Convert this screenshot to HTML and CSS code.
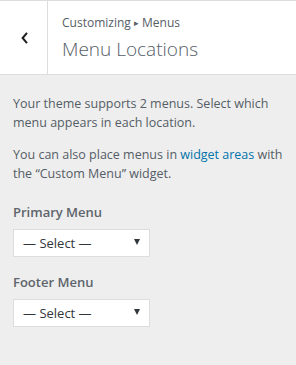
FILE: index.html
```html
<!DOCTYPE html>
<html lang="en">
<head>
    <meta charset="UTF-8">
    <meta name="viewport" content="width=device-width, initial-scale=1.0">
    <title>Menu Locations</title>
    <link rel="stylesheet" href="styles.css">
</head>
<body>
    <div class="panel-header">
        <button class="back-btn" aria-label="Back">
            <svg width="10" height="14" viewBox="0 0 10 14">
                <path d="M7 1.8 L2.6 7 L7 12.2" fill="none" stroke="#1e1e1e" stroke-width="2"/>
            </svg>
        </button>
        <div class="panel-title">
            <span class="crumb">Customizing <span class="sep">&#9656;</span> Menus</span>
            <h3>Menu Locations</h3>
        </div>
    </div>

    <div class="panel-body">
        <p>Your theme supports 2 menus. Select which menu appears in each location.</p>
        <p>You can also place menus in <a href="#">widget areas</a> with the &ldquo;Custom Menu&rdquo; widget.</p>

        <label class="field-label">Primary Menu</label>
        <div class="select-box">
            <span>&mdash; Select &mdash;</span>
            <span class="arrow"></span>
        </div>

        <label class="field-label">Footer Menu</label>
        <div class="select-box">
            <span>&mdash; Select &mdash;</span>
            <span class="arrow"></span>
        </div>
    </div>
</body>
</html>
```

FILE: styles.css
```css
html, body {
    height: 100%;
}

body {
    margin: 0;
    background-color: #eeeeee;
    font-family: 'Open Sans', sans-serif;
    color: #555d66;
}

.panel-header {
    display: flex;
    height: 75px;
    box-sizing: border-box;
    background-color: #ffffff;
    border-top: 1px solid #dddddd;
    border-bottom: 1px solid #dddddd;
}

.back-btn {
    width: 48px;
    flex: none;
    background: #ffffff;
    border: none;
    border-right: 1px solid #dddddd;
    display: flex;
    align-items: center;
    justify-content: center;
    padding: 0 0 0 2px;
}

.panel-title {
    padding: 13px 0 0 14px;
}

.crumb {
    display: block;
    font-size: 12px;
    color: #555d66;
    line-height: 18px;
}

.crumb .sep {
    font-size: 9px;
    vertical-align: 1px;
}

.panel-title h3 {
    margin: 5px 0 0;
    font-size: 19px;
    font-weight: 300;
    color: #555d66;
    line-height: 24px;
}

.panel-body {
    padding: 19px 13px;
}

.panel-body p {
    margin: 0 0 13px;
    font-size: 12.5px;
    line-height: 19px;
}

.panel-body a {
    color: #0073aa;
    text-decoration: none;
}

.field-label {
    display: block;
    margin-top: 19px;
    font-size: 13px;
    font-weight: 600;
    line-height: 20px;
    color: #5d646b;
}

.select-box {
    display: flex;
    align-items: center;
    justify-content: space-between;
    width: 137px;
    height: 28px;
    margin-top: 7px;
    box-sizing: border-box;
    background-color: #ffffff;
    border: 1px solid #dddddd;
    padding: 0 9px;
    font-size: 13px;
    color: #32373c;
}

.select-box + .field-label {
    margin-top: 15px;
}

.arrow {
    width: 0;
    height: 0;
    border-left: 3.5px solid transparent;
    border-right: 3.5px solid transparent;
    border-top: 6px solid #32373c;
    margin-top: -3px;
}
```
